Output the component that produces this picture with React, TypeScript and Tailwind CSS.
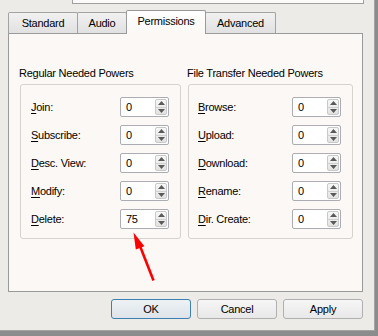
import type { ReactNode } from "react";

const Arrow = ({ up }: { up?: boolean }) => (
  <svg width="7" height="4" viewBox="0 0 7 4">
    <path d={up ? "M3.5 0 L7 4 L0 4 Z" : "M0 0 L7 0 L3.5 4 Z"} fill="#5a5a5a" />
  </svg>
);

const Spin = ({ value }: { value: string }) => (
  <div className="flex h-[20px] w-[49px] rounded-[2px] border border-[#abadb3] bg-white">
    <div className="flex-1 pl-[5px] leading-[18px] text-black">{value}</div>
    <div className="m-[1px] flex w-[12px] flex-col rounded-[2px] border border-[#c9c9c9] bg-gradient-to-b from-[#f7f7f7] to-[#e2e2e2]">
      <div className="flex flex-1 items-center justify-center border-b border-[#cfcfcf]">
        <Arrow up />
      </div>
      <div className="flex flex-1 items-center justify-center">
        <Arrow />
      </div>
    </div>
  </div>
);

const Row = ({ k, rest, value }: { k: string; rest: string; value: string }) => (
  <div className="flex h-[20px] items-center justify-between">
    <span className="leading-[20px]">
      <u className="underline-offset-[2px]">{k}</u>
      {rest}
    </span>
    <Spin value={value} />
  </div>
);

const Group = ({ title, children, w, pl }: { title: string; children: ReactNode; w: string; pl: string }) => (
  <div className="flex flex-col">
    <div className="-ml-[1px] h-[13px] leading-[13px]">{title}</div>
    <div className={`mt-[4px] flex flex-col gap-[8px] rounded-[3px] border border-[#d6d2cd] pt-[12px] pr-[11px] pb-[9px] ${w} ${pl}`}>
      {children}
    </div>
  </div>
);

const tabs = [
  { label: "Standard", w: "w-[70px]" },
  { label: "Audio", w: "w-[50px]" },
  { label: "Permissions", w: "w-[80px]", active: true },
  { label: "Advanced", w: "w-[71px]" },
];

const Button = ({ label, primary }: { label: string; primary?: boolean }) => (
  <button
    className={
      primary
        ? "h-[20px] w-[80px] rounded-[3px] border border-[#3c7fb1] bg-gradient-to-b from-[#eef2f5] to-[#dde3e8] leading-[18px] text-black"
        : "h-[20px] w-[80px] rounded-[3px] border border-[#b0b0b0] bg-gradient-to-b from-[#f6f6f6] to-[#e8e8e8] leading-[18px] text-black"
    }
  >
    {label}
  </button>
);

export default function App() {
  return (
    <div
      className="relative h-[336px] w-[378px] overflow-hidden bg-[#8c8c8c] text-[11px] tracking-[-0.25px] text-[#000]"
      style={{ fontFamily: '"Liberation Sans", Arial, sans-serif' }}
    >
      <div className="flex h-[331px] w-[375px] flex-col border-r border-b border-[#a3a3a3] bg-[#edebe7] pl-[8px] pr-[11px]">
        <div className="ml-[64px] h-[4px] w-[292px] border-x border-b border-[#a0a0a0] bg-[#fcfbf9]" />

        <div className="mt-[6px] flex h-[23px] items-end">
          {tabs.map((t) =>
            t.active ? (
              <div
                key={t.label}
                className={`relative z-10 -mb-[1px] h-[24px] ${t.w} -mx-[1px] rounded-t-[2px] border border-b-0 border-[#9a9a9a] bg-gradient-to-b from-[#ffffff] to-[#fbf8f5] text-center leading-[20px]`}
              >
                {t.label}
              </div>
            ) : (
              <div
                key={t.label}
                className={`h-[21px] ${t.w} rounded-t-[2px] border border-b-0 border-[#a3a3a3] bg-gradient-to-b from-[#f1f1f1] to-[#e1e1e1] text-center leading-[21px] [&+&]:-ml-[1px]`}
              >
                {t.label}
              </div>
            )
          )}
        </div>

        <div className="flex h-[259px] gap-[7px] border border-[#9a9a9a] bg-[#fbf8f5] pt-[33px] pl-[11px]">
          <Group title="Regular Needed Powers" w="w-[161px]" pl="pl-[10px]">
            <Row k="J" rest="oin:" value="0" />
            <Row k="S" rest="ubscribe:" value="0" />
            <Row k="D" rest="esc. View:" value="0" />
            <Row k="M" rest="odify:" value="0" />
            <Row k="D" rest="elete:" value="75" />
          </Group>
          <Group title="File Transfer Needed Powers" w="w-[165px]" pl="pl-[9px]">
            <Row k="B" rest="rowse:" value="0" />
            <Row k="U" rest="pload:" value="0" />
            <Row k="D" rest="ownload:" value="0" />
            <Row k="R" rest="ename:" value="0" />
            <Row k="D" rest="ir. Create:" value="0" />
          </Group>
        </div>

        <div className="mt-[7px] flex justify-end gap-[6px]">
          <Button label="OK" primary />
          <Button label="Cancel" />
          <Button label="Apply" />
        </div>
      </div>

      <svg className="absolute left-0 top-0" width="378" height="336" viewBox="0 0 378 336">
        <line x1="140" y1="246" x2="153.5" y2="280.5" stroke="#ff0000" strokeWidth="2.6" />
        <path d="M133.5 232.5 L144.4 246.2 L135.8 249.6 Z" fill="#ff0000" />
      </svg>
    </div>
  );
}
